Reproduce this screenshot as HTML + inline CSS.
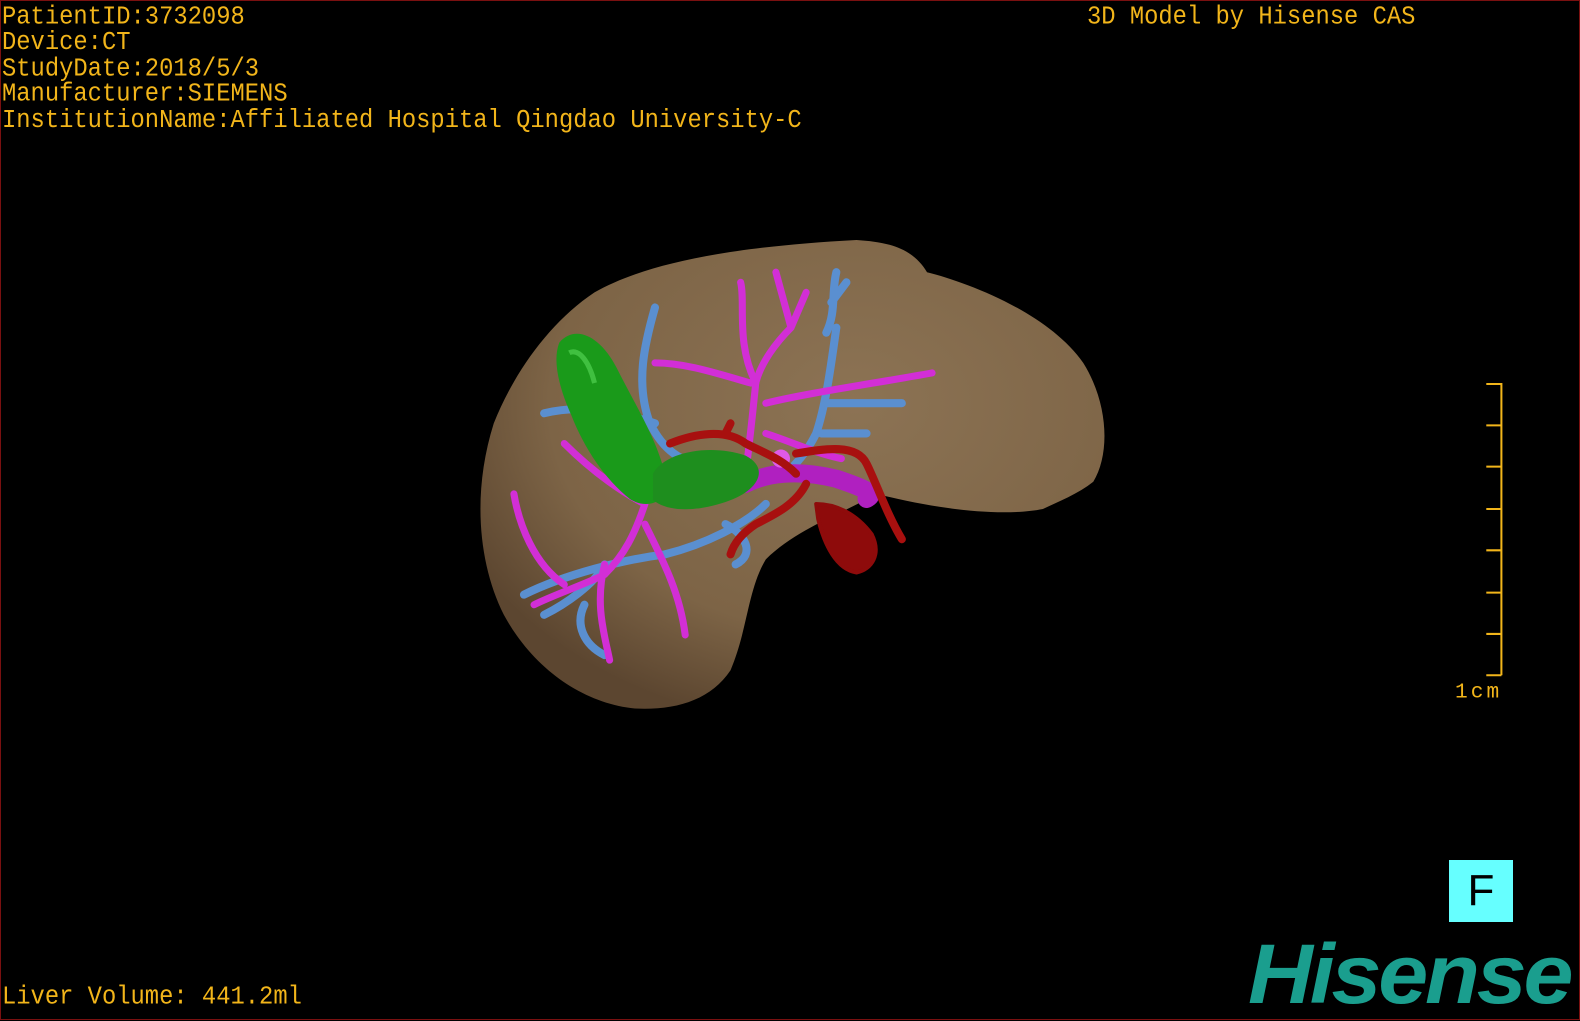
<!DOCTYPE html>
<html><head><meta charset="utf-8"><style>
html,body{margin:0;padding:0;background:#000;}
body{width:1580px;height:1020px;position:relative;overflow:hidden;}
.frame{position:absolute;left:0;top:0;width:1578px;height:1018px;border:1px solid #7a1010;}
.t{position:absolute;font-family:"Liberation Mono",monospace;color:#f2b51a;font-size:23.8px;line-height:23.4px;white-space:pre;transform:scaleY(1.1);transform-origin:0 0;}
svg{position:absolute;left:0;top:0;}
.F{position:absolute;left:1449px;top:860px;width:64px;height:62px;background:#66ffff;color:#000;font-family:"Liberation Sans",sans-serif;font-size:44px;line-height:62px;text-align:center;}
.logo{position:absolute;left:1248px;top:932px;font-family:"Liberation Sans",sans-serif;font-weight:bold;font-style:italic;font-size:84px;line-height:84px;color:#1a9e8e;letter-spacing:-3px;transform:scaleX(1.07);transform-origin:0 0;}
</style></head><body>
<div class="frame"></div>
<div class="t" style="left:2px;top:5px">PatientID:3732098
Device:CT
StudyDate:2018/5/3
Manufacturer:SIEMENS
InstitutionName:Affiliated Hospital Qingdao University-C</div>
<div class="t" style="left:1087px;top:5px">3D Model by Hisense CAS</div>
<div class="t" style="left:2px;top:985px">Liver Volume: 441.2ml</div>
<svg width="1580" height="1020" viewBox="0 0 1568 1012">
<defs><radialGradient id="lg" cx="0.6" cy="0.35" r="0.7"><stop offset="0" stop-color="#8c7354"/><stop offset="0.7" stop-color="#7d6446"/><stop offset="1" stop-color="#5c4630"/></radialGradient></defs>
<path d="M850,238 C880,240 905,245 920,270 C960,280 1040,310 1075,360 C1100,400 1102,450 1085,478 C1070,490 1050,498 1035,505 C1000,512 940,508 870,490 C835,510 790,525 760,555 C742,585 742,625 725,665 C705,695 670,705 630,703 C580,698 530,665 500,610 C475,560 468,490 490,420 C510,370 545,320 590,290 C640,262 720,245 850,238 Z" fill="url(#lg)"/>
<g fill="none" stroke-linecap="round" stroke-linejoin="round">
<g stroke="#5a8fd0" stroke-width="8">
<path d="M520,590 C560,570 620,555 660,550 C700,540 740,520 760,500"/>
<path d="M650,305 C640,340 630,380 645,420 C660,450 680,460 700,460"/>
<path d="M830,325 C825,360 820,400 810,430 C800,450 790,460 780,470"/>
<path d="M830,270 C825,290 830,310 820,330 M840,280 L825,300"/>
<path d="M820,400 L895,400 M815,430 L860,430"/>
<path d="M580,600 C570,620 580,640 600,650 M600,560 C590,580 560,600 540,610"/>
<path d="M650,420 C620,410 580,400 540,410"/>
<path d="M720,520 C740,530 750,550 730,560"/>
</g>
<g stroke="#d22ed6" stroke-width="7">
<path d="M740,470 C745,430 748,400 750,380 C755,360 770,340 785,325 L800,290 M785,325 L770,270"/>
<path d="M745,380 C710,370 680,360 650,360 M750,380 C730,340 740,300 735,280"/>
<path d="M760,400 C800,390 870,380 925,370"/>
<path d="M760,430 C790,440 810,450 835,455"/>
<path d="M640,500 C620,490 590,470 560,440 M640,500 C630,530 620,550 600,570 C580,580 550,590 530,600"/>
<path d="M640,520 C660,560 675,590 680,630"/>
<path d="M600,560 C590,600 600,630 605,655 M560,580 C530,560 515,520 510,490"/>
</g>
<path d="M740,480 C760,470 790,465 830,475 C860,485 870,490 860,495" stroke="#b020c0" stroke-width="18"/>
<circle cx="775" cy="455" r="9" fill="#e05ae8" stroke="none"/>
<g stroke="#a8100f" stroke-width="8">
<path d="M665,440 C690,430 720,425 740,440 C760,450 775,455 790,470"/>
<path d="M790,450 C820,445 850,440 860,460 C870,480 880,510 895,535"/>
<path d="M800,480 C790,500 770,510 750,520 C735,530 728,540 725,550"/>
<path d="M720,430 L725,420"/>
</g>
<path d="M810,500 C830,500 850,510 865,530 C875,550 865,565 850,568 C830,565 818,540 812,515 Z" fill="#8e0b0b" stroke="#8e0b0b" stroke-width="4"/>
</g>
<path d="M555,340 C570,322 595,332 612,365 C632,405 655,440 662,480 C662,500 640,505 625,495 C600,475 580,445 567,412 C555,385 548,358 555,340 Z" fill="#1a9a1a"/>
<path d="M648,470 C660,448 705,440 740,452 C765,465 752,488 720,498 C690,508 662,508 648,496 Z" fill="#1e8e1e"/>
<path d="M565,350 C575,345 585,360 590,380" stroke="#40c040" stroke-width="5" fill="none"/>
<g stroke="#f2b51a" stroke-width="2" fill="none">
<path d="M1490,380 L1490,670 M1475,381 L1490,381 M1475,422 L1490,422 M1475,463 L1490,463 M1475,505 L1490,505 M1475,546 L1490,546 M1475,588 L1490,588 M1475,629 L1490,629 M1475,670 L1490,670"/>
</g>
<text x="1444" y="692" fill="#f2b51a" font-family="Liberation Mono, monospace" font-size="21" letter-spacing="3">1cm</text>
</svg>
<div class="F">F</div>
<div class="logo">Hisense</div>
</body></html>
